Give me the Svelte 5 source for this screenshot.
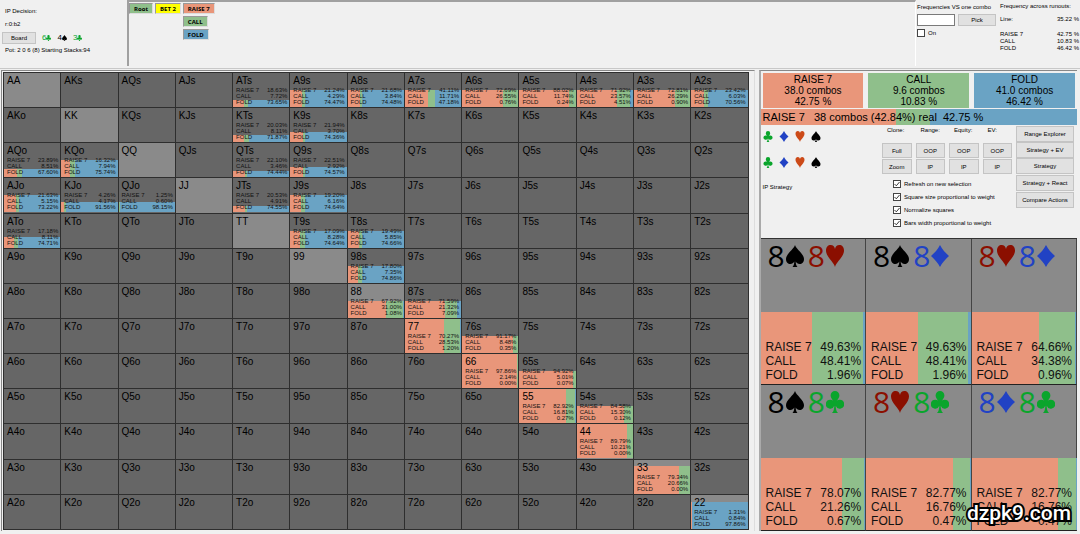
<script>
  const ranks = ['A', 'K', 'Q', 'J', 'T', '9', '8', '7', '6', '5', '4', '3', '2'];
  const actions = ['RAISE 7', 'CALL', 'FOLD'];

  // hand: [raise, call, fold, bar height in percent]
  const strategy = {
    ATs: ['18.63', '7.72', '73.65', 20], A9s: ['21.24', '4.29', '74.47', 50],
    A8s: ['21.68', '3.84', '74.48', 50], A7s: ['41.11', '11.71', '47.18', 50],
    A6s: ['72.69', '26.55', '0.76', 50], A5s: ['88.02', '11.74', '0.24', 50],
    A4s: ['71.92', '23.57', '4.51', 50], A3s: ['72.81', '26.29', '0.90', 50],
    A2s: ['23.42', '6.03', '70.56', 50], KTs: ['20.03', '8.11', '71.87', 20],
    K9s: ['21.94', '3.70', '74.36', 30], AQo: ['23.89', '8.51', '67.60', 25],
    KQo: ['16.32', '7.94', '75.74', 50], QTs: ['22.10', '3.46', '74.44', 20],
    Q9s: ['22.51', '2.92', '74.57', 30], AJo: ['21.63', '5.15', '73.22', 50],
    KJo: ['4.26', '4.17', '91.56', 30], QJo: ['1.25', '0.60', '98.15', 30],
    JTs: ['20.53', '4.91', '74.55', 20], J9s: ['19.20', '6.16', '74.64', 50],
    ATo: ['17.18', '8.11', '74.71', 30], T9s: ['17.09', '8.28', '74.64', 50],
    T8s: ['19.49', '5.85', '74.66', 50], '98s': ['17.80', '7.35', '74.86', 50],
    '88': ['67.92', '31.00', '1.08', 50], '87s': ['71.59', '21.32', '7.09', 50],
    '77': ['70.27', '28.53', '1.20', 100], '76s': ['91.17', '8.48', '0.35', 50],
    '66': ['97.86', '2.14', '0.00', 100], '65s': ['94.92', '5.01', '0.07', 50],
    '55': ['82.92', '16.81', '0.27', 100], '54s': ['84.58', '15.30', '0.12', 50],
    '44': ['89.79', '10.21', '0.00', 100], '33': ['79.34', '20.66', '0.00', 80],
    '22': ['1.31', '0.84', '97.86', 80]
  };

  const rows = ranks.map((r, i) =>
    ranks.map((c, j) => {
      const name = i === j ? r + c : i < j ? r + c + 's' : c + r + 'o';
      return { name, pair: i === j, data: strategy[name] };
    })
  );

  const summary = [
    { cls: 'raise', name: 'RAISE 7', combos: '38.0 combos', pct: '42.75 %' },
    { cls: 'call', name: 'CALL', combos: '9.6 combos', pct: '10.83 %' },
    { cls: 'fold', name: 'FOLD', combos: '41.0 combos', pct: '46.42 %' }
  ];

  const combos = [
    { suits: ['s', 'h'], v: ['49.63', '48.41', '1.96'] },
    { suits: ['s', 'd'], v: ['49.63', '48.41', '1.96'] },
    { suits: ['h', 'd'], v: ['64.66', '34.38', '0.96'] },
    { suits: ['s', 'c'], v: ['78.07', '21.26', '0.67'] },
    { suits: ['h', 'c'], v: ['82.77', '16.76', '0.47'] },
    { suits: ['d', 'c'], v: ['82.77', '16.76', '0.47'] }
  ];

  const columns = [
    { label: 'Clone:', buttons: ['Full', 'Zoom'] },
    { label: 'Range:', buttons: ['OOP', 'IP'] },
    { label: 'Equity:', buttons: ['OOP', 'IP'] },
    { label: 'EV:', buttons: ['OOP', 'IP'] }
  ];
  const views = [
    ['Range Explorer', 'Strategy + EV', 'Strategy'],
    ['Strategy + React'],
    ['Compare Actions']
  ];
  const options = [
    'Refresh on new selection',
    'Square size proportional to weight',
    'Normalize squares',
    'Bars width proportional to weight'
  ];
  const board = [['6', 'c'], ['4', 's'], ['3', 'c']];
</script>

{#snippet suit(s)}
  <svg class="suit {s}" viewBox="0 0 18 22" aria-hidden="true">
    {#if s === 's'}
      <path d="M9 0C10 4 18 9 18 14C18 17.500 16 19 13.700 19C11.800 19 10.500 18 9.700 16.500C9.800 19 10.300 21 11.500 22H6.500C7.700 21 8.200 19 8.300 16.500C7.500 18 6.200 19 4.300 19C2 19 0 17.500 0 14C0 9 8 4 9 0Z" />
    {:else if s === 'h'}
      <path d="M9 22C8 17 0 12 0 5.500C0 2 2 0 4.700 0C7 0 8.500 1.600 9 4C9.500 1.600 11 0 13.300 0C16 0 18 2 18 5.500C18 12 10 17 9 22Z" />
    {:else if s === 'd'}
      <path d="M9 0C11 4 14.500 8 18 11C14.500 14 11 18 9 22C7 18 3.500 14 0 11C3.500 8 7 4 9 0Z" />
    {:else}
      <path d="M9 0A4.400 4.400 0 0 1 13.400 4.400C13.400 6.300 12 8.300 10.600 9.800C11.500 9.100 12.500 8.800 13.700 8.800A4.400 4.400 0 1 1 9.700 14.800C9.800 18 10.300 20.500 12 22H6C7.700 20.500 8.200 18 8.300 14.800A4.400 4.400 0 1 1 4.300 8.800C5.500 8.800 6.500 9.100 7.400 9.800C6 8.300 4.600 6.300 4.600 4.400A4.400 4.400 0 0 1 9 0Z" />
    {/if}
  </svg>
{/snippet}

{#snippet bars(v)}
  <span class="raise" style="width:{v[0]}%"></span>
  <span class="call" style="width:{v[1]}%"></span>
  <span class="fold rest"></span>
{/snippet}

{#snippet freqs(v)}
  <dl class="freqs">
    {#each actions as a, i}
      <div><dt>{a}</dt><dd>{v[i]}%</dd></div>
    {/each}
  </dl>
{/snippet}

<div class="app">
  <header>
    <section class="decision">
      <p>IP Decision:</p>
      <p>r:0:b2</p>
      <div class="board">
        <button>Board</button>
        {#each board as [r, s]}
          <span class="card {s}">{r}{@render suit(s)}</span>
        {/each}
      </div>
      <p>Pot: 2 0 6 (8) Starting Stacks:94</p>
    </section>

    <nav class="tree">
      <button class="call">Root</button>
      <button class="bet">BET 2</button>
      <div class="branch">
        <button class="raise">RAISE 7</button>
        <button class="call">CALL</button>
        <button class="fold">FOLD</button>
      </div>
    </nav>

    <section class="versus">
      <label for="combo">Frequencies VS one combo</label>
      <div class="pick">
        <input id="combo" type="text" />
        <button>Pick</button>
      </div>
      <label class="check"><input type="checkbox" /> On</label>
    </section>

    <section class="runouts">
      <p>Frequency across runouts:</p>
      <dl>
        <div class="line"><dt>Line:</dt><dd>35.22 %</dd></div>
        {#each summary as s}
          <div><dt>{s.name}</dt><dd>{s.pct}</dd></div>
        {/each}
      </dl>
    </section>
  </header>

  <main>
    <section class="range">
      <table>
        <tbody>
          {#each rows as row}
            <tr>
              {#each row as cell}
                <td class:pair={cell.pair}>
                  <div class="cell">
                    {#if cell.data}
                      <div class="fill" style="height:{cell.data[3]}%">{@render bars(cell.data)}</div>
                    {/if}
                    <span class="hand">{cell.name}</span>
                    {#if cell.data}{@render freqs(cell.data)}{/if}
                  </div>
                </td>
              {/each}
            </tr>
          {/each}
        </tbody>
      </table>
    </section>

    <aside>
      <div class="summary">
        {#each summary as s}
          <div class={s.cls}><span>{s.name}</span><span>{s.combos}</span><span>{s.pct}</span></div>
        {/each}
      </div>
      <div class="total">
        <div class="fill">{@render bars(['42.75', '10.83'])}</div>
        <span class="caption">RAISE 7   38 combos (42.84%) real  42.75 %</span>
      </div>

      <div class="controls">
        <div class="filters">
          {#each [0, 1] as _}
            <div class="suits">
              {#each ['c', 'd', 'h', 's'] as s}{@render suit(s)}{/each}
            </div>
          {/each}
          <p>IP Strategy</p>
        </div>
        <div class="middle">
          <div class="columns">
            {#each columns as col}
              <div class="column">
                <span>{col.label}</span>
                {#each col.buttons as b}<button>{b}</button>{/each}
              </div>
            {/each}
          </div>
          <div class="options">
            {#each options as o}
              <label class="check"><input type="checkbox" checked /> {o}</label>
            {/each}
          </div>
        </div>
        <div class="views">
          {#each views as group}
            <div class="group">
              {#each group as v}<button>{v}</button>{/each}
            </div>
          {/each}
        </div>
      </div>

      <div class="combos">
        {#each combos as c}
          <article>
            <div class="cards">
              {#each c.suits as s}
                <span class="card {s}">8{@render suit(s)}</span>
              {/each}
            </div>
            <div class="mix">
              <div class="fill">{@render bars(c.v)}</div>
              {@render freqs(c.v)}
            </div>
          </article>
        {/each}
      </div>
    </aside>
  </main>
  <div class="mark">dzpk9.com</div>
</div>

<style>
  :global(body) { margin: 0; background: #f0f0f0; }
  .app {
    position: relative;
    display: flex;
    flex-direction: column;
    min-height: 100vh;
    box-sizing: border-box;
    background: #f0f0f0;
    color: #000;
    font: 6px/8px "Liberation Sans", Arial, sans-serif;
  }
  p, dl, dd { margin: 0; }
  button {
    padding: 0;
    border: 1px solid #c4c4c4;
    background: #e1e1e1;
    color: #000;
    font: inherit;
    white-space: nowrap;
  }
  .raise { background: #e9967a; }
  .call { background: #8fbf8b; }
  .fold { background: #6aa3c4; }
  .bet { background: #ffff00; }
  .suit { display: block; fill: currentColor; }
  .s { color: #000; }
  .h { color: #8b0f00; }
  .d { color: #2142c4; }
  .c { color: #0aa52c; }

  header {
    display: flex;
    height: 69px;
    border-bottom: 1px solid #c8c8c8;
    box-sizing: border-box;
  }
  .decision {
    display: flex;
    flex-direction: column;
    gap: 5px;
    width: 127px;
    padding: 7px 0 0 5px;
    box-sizing: border-box;
  }
  .board { display: flex; align-items: center; gap: 6px; margin: -1px 0 -3px -3px; }
  .board button { width: 34px; height: 12px; }
  .board .card { display: flex; align-items: center; font-size: 8px; }
  .board .suit { width: 5px; height: 6px; }
  .tree {
    display: flex;
    flex: 1;
    align-items: flex-start;
    gap: 2px;
    margin-bottom: 2px;
    border-top: 2px solid #a0a0a0;
    border-left: 2px solid #a0a0a0;
    border-right: 1px solid #fff;
  }
  .tree button {
    height: 11px;
    padding: 0 4px;
    border: 1px solid #999;
    border-right-color: #ddd;
    border-bottom-color: #ddd;
    font: bold 6px/8px "Open Sans", sans-serif;
  }
  .tree .call, .tree .fold, .tree .raise, .tree .bet { margin-top: 1px; }
  .branch { display: flex; flex-direction: column; align-items: flex-start; gap: 1px; }
  .versus { width: 83px; padding: 3px 0 0 1px; box-sizing: border-box; white-space: nowrap; }
  .pick { display: flex; gap: 3px; margin: 3px 0 3px; }
  .pick input {
    width: 38px;
    height: 12px;
    padding: 0 2px;
    border: 1px solid #7a7a7a;
    box-sizing: border-box;
    font: inherit;
  }
  .pick button { width: 38px; height: 12px; }
  .check { display: flex; align-items: center; gap: 3px; }
  .check input {
    appearance: none;
    width: 8px;
    height: 8px;
    margin: 0;
    border: 1px solid #444;
    background: #fff;
  }
  .check input:checked {
    background: #fff url("data:image/svg+xml,%3Csvg xmlns='http://www.w3.org/2000/svg' viewBox='0 0 6 6'%3E%3Cpath d='M.5 3L2.300 4.800L5.500 1' fill='none' stroke='%23222' stroke-width='.9'/%3E%3C/svg%3E") center / contain;
  }
  .runouts { width: 81px; padding: 2px 1px 0 1px; box-sizing: border-box; }
  .runouts dl { line-height: 7px; }
  .runouts dl div { display: flex; justify-content: space-between; }
  .runouts .line { margin: 6px 0 8px; }

  main { display: flex; flex: 1; gap: 4px; padding: 1px 3px 3px 1px; }
  .range {
    flex: 747 1 0;
    padding: 1px 5px 1px 1px;
    border-top: 1px solid #888;
    border-left: 1px solid #888;
    border-right: 1px solid #ddd;
  }
  table {
    width: 100%;
    height: 100%;
    table-layout: fixed;
    border-collapse: collapse;
    background: #666;
  }
  td { height: 33px; padding: 0; border: 1px solid #2e2e2e; }
  .pair { background: #8a8a8a; }
  .cell { position: relative; height: 34px; overflow: hidden; }
  .fill { position: absolute; right: 0; bottom: 0; left: 0; display: flex; }
  .rest { flex: 1; }
  .hand {
    position: relative;
    display: block;
    padding: 2px 0 0 3px;
    color: #000;
    font: 10px/12px "Liberation Sans", Arial, sans-serif;
  }
  .freqs { position: relative; color: #111; }
  .freqs div { display: flex; justify-content: space-between; }
  .cell .freqs { padding: 0 2px 0 3px; font: 6px/6px "Liberation Sans", Arial, sans-serif; }

  aside {
    display: flex;
    flex-direction: column;
    flex: 317 1 0;
    min-width: 0;
    padding: 1px 0 0;
    border-top: 1px solid #888;
    border-left: 2px solid #aaa;
  }
  .summary { display: flex; gap: 5px; padding: 1px 2px; }
  .summary div {
    display: flex;
    flex: 1;
    flex-direction: column;
    align-items: center;
    padding: 1px 0;
    font: 10px/11px "Liberation Sans", Arial, sans-serif;
  }
  .total { position: relative; height: 16px; }
  .total .fill, .mix .fill { top: 0; }
  .caption {
    position: relative;
    display: block;
    padding-left: 2px;
    color: #000;
    font: 11px/16px "Liberation Sans", Arial, sans-serif;
    white-space: pre;
  }
  .controls { display: flex; gap: 4px; height: 113px; padding-right: 3px; }
  .filters { flex: 1; padding: 6px 0 0 2px; }
  .suits { display: flex; gap: 6px; margin-bottom: 15px; }
  .suits .suit { width: 10px; height: 11px; }
  .suits .h { color: #cc4a18; }
  .middle { width: 130px; }
  .columns { display: flex; gap: 4px; }
  .column { display: flex; flex: 1; flex-direction: column; }
  .column span { padding: 1px 0 9px 5px; }
  .column button { height: 15px; margin-bottom: 1px; }
  .options { display: flex; flex-direction: column; gap: 5px; padding: 5px 0 0 11px; white-space: nowrap; }
  .views { display: flex; flex-direction: column; gap: 1px; width: 58px; padding-top: 1px; }
  .group { display: flex; flex-direction: column; }
  .views button { height: 16px; }

  .combos {
    display: grid;
    flex: 1;
    grid-template-columns: repeat(3, 1fr);
    border-top: 1px solid #333;
  }
  article {
    display: grid;
    grid-template-rows: 1fr 1fr;
    border-right: 1px solid #444;
    border-bottom: 1px solid #222;
    background: #8a8a8a;
  }
  .cards { display: flex; gap: 4px; padding: 6px 0 0 7px; }
  .cards .card { display: flex; gap: 1px; font: 30px/22px "Open Sans", sans-serif; }
  .cards .suit { width: 18px; height: 22px; }
  .mix { position: relative; display: flex; flex-direction: column; justify-content: flex-end; }
  .mix .freqs { padding: 0 4px 2px 5px; font: 12px/14px "Liberation Sans", Arial, sans-serif; }

  .mark {
    position: absolute;
    right: 9px;
    bottom: 9px;
    color: #fff;
    font: 500 21px/24px Roboto, sans-serif;
    -webkit-text-stroke: 4px #000;
    paint-order: stroke fill;
  }
</style>
